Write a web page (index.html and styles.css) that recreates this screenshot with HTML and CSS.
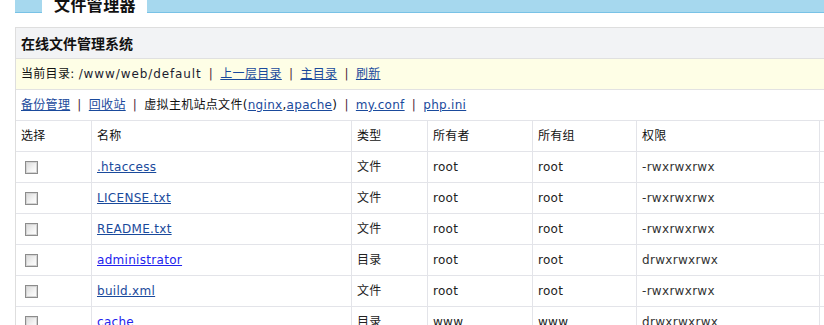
FILE: index.html
```html
<!DOCTYPE html>
<html lang="zh-CN">
<head>
<meta charset="utf-8">
<title>文件管理器</title>
<link rel="stylesheet" href="styles.css">
</head>
<body>
<div class="page">
  <div class="topbar">
    <div class="tab">文件管理器</div>
  </div>
  <div class="box">
    <div class="box-title">在线文件管理系统</div>
    <div class="curdir">当前目录: <span class="path">/www/web/default</span> <span class="sep">|</span> <a href="#">上一层目录</a> <span class="sep">|</span> <a href="#">主目录</a> <span class="sep">|</span> <a href="#">刷新</a></div>
    <div class="tools"><a href="#">备份管理</a> <span class="sep">|</span> <a href="#">回收站</a> <span class="sep">|</span> 虚拟主机站点文件(<a href="#">nginx</a>,<a href="#">apache</a>) <span class="sep">|</span> <a href="#">my.conf</a> <span class="sep">|</span> <a href="#">php.ini</a></div>
    <table class="files">
      <thead>
        <tr>
          <th class="c-sel">选择</th>
          <th class="c-name">名称</th>
          <th class="c-type">类型</th>
          <th class="c-owner">所有者</th>
          <th class="c-group">所有组</th>
          <th class="c-perm">权限</th>
          <th class="c-op"></th>
        </tr>
      </thead>
      <tbody>
        <tr><td><input type="checkbox" class="chk"></td><td><a href="#">.htaccess</a></td><td>文件</td><td>root</td><td>root</td><td class="perm">-rwxrwxrwx</td><td></td></tr>
        <tr><td><input type="checkbox" class="chk"></td><td><a href="#">LICENSE.txt</a></td><td>文件</td><td>root</td><td>root</td><td class="perm">-rwxrwxrwx</td><td></td></tr>
        <tr><td><input type="checkbox" class="chk"></td><td><a href="#">README.txt</a></td><td>文件</td><td>root</td><td>root</td><td class="perm">-rwxrwxrwx</td><td></td></tr>
        <tr><td><input type="checkbox" class="chk"></td><td><a href="#" class="dir">administrator</a></td><td>目录</td><td>root</td><td>root</td><td class="perm">drwxrwxrwx</td><td></td></tr>
        <tr><td><input type="checkbox" class="chk"></td><td><a href="#">build.xml</a></td><td>文件</td><td>root</td><td>root</td><td class="perm">-rwxrwxrwx</td><td></td></tr>
        <tr><td><input type="checkbox" class="chk"></td><td><a href="#" class="dir">cache</a></td><td>目录</td><td>www</td><td>www</td><td class="perm">drwxrwxrwx</td><td></td></tr>
      </tbody>
    </table>
  </div>
</div>
</body>
</html>
```

FILE: styles.css
```css
html, body {
  margin: 0;
  padding: 0;
  overflow: hidden;
  background: #fff;
}
body {
  font-family: "DejaVu Sans", "Noto Sans CJK SC", sans-serif;
  font-size: 12px;
  color: #222;
  letter-spacing: 0.3px;
}
.page {
  padding-left: 15px;
  width: 1000px;
}
.topbar {
  height: 12px;
  background: #a6d8ee;
  border-bottom: 1px solid #78c2e6;
  display: flex;
  padding-left: 27px;
}
.tab {
  background: #fff;
  height: 13px;
  margin-bottom: -1px;
  padding: 0 11px 0 12px;
  overflow: hidden;
  font-family: "Noto Sans CJK SC", sans-serif;
  font-size: 16px;
  font-weight: bold;
  line-height: 9px;
  letter-spacing: 0.4px;
  color: #111;
}
.box {
  margin-top: 14px;
  border: 1px solid #dedede;
  border-bottom: none;
  width: 924px;
}
.box-title {
  height: 30px;
  line-height: 30px;
  background: #f2f3f5;
  border-bottom: 1px solid #e0e0e0;
  padding-left: 5px;
  font-family: "Noto Sans CJK SC", sans-serif;
  font-size: 14px;
  font-weight: bold;
  color: #111;
  letter-spacing: 0;
}
.curdir {
  height: 30px;
  line-height: 30px;
  background: #fefee6;
  border-bottom: 1px solid #e2e2e2;
  padding-left: 5px;
  color: #111;
}
.curdir .path {
  letter-spacing: 0.9px;
  color: #1c1c30;
}
.tools {
  height: 30px;
  line-height: 30px;
  padding-left: 5px;
  color: #111;
}
.sep {
  color: #4a2a3a;
  padding: 0 3px;
}
a {
  color: #1a4a9c;
  text-decoration: underline;
}
a.dir {
  color: #2222ee;
}
.files {
  table-layout: fixed;
  border-collapse: separate;
  border-spacing: 0;
  width: 924px;
}
.files th,
.files td {
  box-sizing: border-box;
  height: 31px;
  padding: 0 5px;
  text-align: left;
  font-weight: normal;
  border-right: 1px solid #e3e4e9;
  border-bottom: 1px solid #e3e4e9;
  vertical-align: middle;
  white-space: nowrap;
  overflow: hidden;
  line-height: 16px;
}
.files th {
  border-top: 1px solid #e3e4e9;
  height: 32px;
  color: #111;
}
.c-sel { width: 76px; }
.c-name { width: 260px; }
.c-type { width: 76px; }
.c-owner { width: 105px; }
.c-group { width: 104px; }
.c-perm { width: 183px; }
.c-op { width: 120px; }
.files td.perm {
  color: #333;
}
.chk {
  -webkit-appearance: none;
  appearance: none;
  display: block;
  width: 13px;
  height: 13px;
  margin: 0 0 0 4px;
  border: 1px solid #8c8c8c;
  box-shadow: inset 0 0 0 1px #d4d4d4;
  background: linear-gradient(135deg, #d8d8d8 0%, #f4f4f4 60%, #ffffff 100%);
}
```
